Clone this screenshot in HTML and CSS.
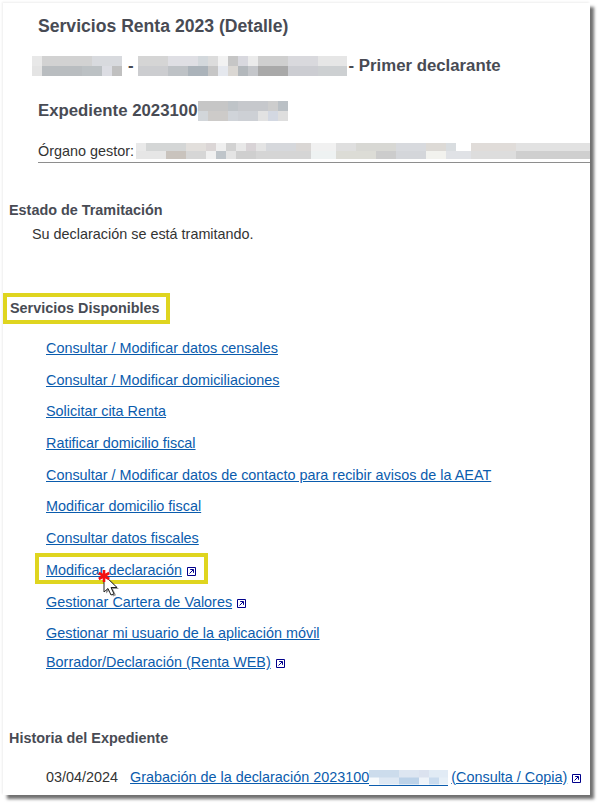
FILE: index.html
```html
<!DOCTYPE html>
<html lang="es">
<head>
<meta charset="utf-8">
<title>Servicios Renta 2023</title>
<link rel="stylesheet" href="styles.css">
</head>
<body>
<main class="card">
  <header class="head">
    <h1 class="title main-title">Servicios Renta 2023 (Detalle)</h1>
    <p class="title person"><span class="mosaic m-name"></span><span class="dash">-</span><span class="mosaic m-surname"></span><span>- Primer declarante</span></p>
    <p class="title file"><span>Expediente 2023100</span><span class="mosaic m-file"></span></p>
    <p class="organ"><span>Órgano gestor:</span><span class="mosaic m-organ"></span></p>
  </header>

  <section class="status">
    <h2 class="section-title">Estado de Tramitación</h2>
    <p class="status-text">Su declaración se está tramitando.</p>
  </section>

  <section class="services">
    <h2 class="section-title boxed">Servicios Disponibles</h2>
    <ul class="links">
      <li><a href="#">Consultar / Modificar datos censales</a></li>
      <li><a href="#">Consultar / Modificar domiciliaciones</a></li>
      <li><a href="#">Solicitar cita Renta</a></li>
      <li><a href="#">Ratificar domicilio fiscal</a></li>
      <li><a href="#">Consultar / Modificar datos de contacto para recibir avisos de la AEAT</a></li>
      <li><a href="#">Modificar domicilio fiscal</a></li>
      <li><a href="#">Consultar datos fiscales</a></li>
      <li class="highlight"><a href="#">Modificar declaración</a>
        <svg class="ext" viewBox="0 0 9 9"><path d="M.5.5h8v8h-8z" fill="#fff" stroke="#00008b"/><path d="M3.200 2.500h3.300v3.300M6.200 2.800 2.500 6.500" fill="none" stroke="#00008b"/></svg>
        <svg class="pointer" viewBox="0 0 24 32">
          <path d="M7 5v17l4-3.500 3 6.500 3-1.200-3-6.300h6z" fill="#333" opacity=".5" transform="translate(2 1.500)"/>
          <path d="M7 5v17l4-3.500 3 6.500 3-1.200-3-6.300h6z" fill="#fff" stroke="#222" stroke-linejoin="round"/>
          <path d="M7 0v12M1.800 3l10.400 6M12.200 3 1.800 9" stroke="#f40f0f" stroke-width="2.600" fill="none"/>
        </svg>
      </li>
      <li><a href="#">Gestionar Cartera de Valores</a>
        <svg class="ext" viewBox="0 0 9 9"><path d="M.5.5h8v8h-8z" fill="#fff" stroke="#00008b"/><path d="M3.200 2.500h3.300v3.300M6.200 2.800 2.500 6.500" fill="none" stroke="#00008b"/></svg>
      </li>
      <li class="tight"><a href="#">Gestionar mi usuario de la aplicación móvil</a></li>
      <li><a href="#">Borrador/Declaración (Renta WEB)</a>
        <svg class="ext" viewBox="0 0 9 9"><path d="M.5.5h8v8h-8z" fill="#fff" stroke="#00008b"/><path d="M3.200 2.500h3.300v3.300M6.200 2.800 2.500 6.500" fill="none" stroke="#00008b"/></svg>
      </li>
    </ul>
  </section>

  <section class="history">
    <h2 class="section-title">Historia del Expediente</h2>
    <p class="entry"><span class="date">03/04/2024</span><a href="#">Grabación de la declaración 2023100<span class="mosaic m-entry"></span></a> <a href="#">(Consulta / Copia)</a>
      <svg class="ext" viewBox="0 0 9 9"><path d="M.5.5h8v8h-8z" fill="#fff" stroke="#00008b"/><path d="M3.200 2.500h3.300v3.300M6.200 2.800 2.500 6.500" fill="none" stroke="#00008b"/></svg>
    </p>
  </section>
</main>
</body>
</html>
```
FILE: styles.css
```css
*, *::before { box-sizing: border-box; }

html, body {
  margin: 0;
  height: 100%;
  background: #fff;
}

body {
  font-family: "Liberation Sans", Arial, sans-serif;
  font-size: 14.4px;
  color: #333;
  overflow: hidden;
  padding: 3px 0 0 3px;
}

.card {
  width: 587px;
  height: 792px;
  background: #fff;
  box-shadow: 4px 4px 3px #707070, -1px -1px 2px #eee;
  overflow: hidden;
  padding-top: 13px;
}

.head {
  padding-left: 35px;
}

.title {
  margin: 0;
  font-size: 16.8px;
  font-weight: 700;
  line-height: 20px;
  color: #484b54;
}

.main-title { font-size: 17.6px; }

.person {
  display: flex;
  align-items: center;
  margin: 20px 0 0 -6px;
  height: 20px;
  white-space: nowrap;
}

.dash { margin: 0 4px 0 6px; }

.file {
  display: flex;
  align-items: center;
  margin-top: 25px;
  height: 20px;
}

.organ {
  display: flex;
  align-items: center;
  height: 20px;
  margin: 20px 0 0;
  border-bottom: 1px solid #8e8e8e;
  box-sizing: content-box;
  padding-bottom: 1px;
  color: #333;
  line-height: 16px;
  white-space: nowrap;
}

.mosaic {
  display: inline-block;
  flex: none;
  background-repeat: no-repeat;
  background-size: 100% 50%;
  background-position: top, bottom;
}

.m-name {
  width: 90px;
  height: 20px;
  background-image:
    linear-gradient(90deg, #e8e8e8 0 10px, #d2d2d2 10px 60px, #d8dade 60px 90px),
    linear-gradient(90deg, #e4e4e4 0 10px, #b9bdc0 10px 50px, #bcc1c4 50px 70px, #dcdde3 70px 80px, #c0c0c0 80px 90px);
}

.m-surname {
  width: 209px;
  height: 20px;
  margin-right: 2px;
  background-image:
    linear-gradient(90deg, #d5d5d5 0 30px, #dfdfe4 30px 60px, #d3d8dc 60px 70px, #dcdcdc 70px 80px, #f2f2f2 80px 90px, #c6c6c6 90px 100px, #d8d8de 100px 110px, #ebebeb 110px 120px, #cfcfcf 120px 150px, #d9d9dd 150px 180px, #e6e6e6 180px 209px),
    linear-gradient(90deg, #cccdd0 0 30px, #bec2c6 30px 50px, #abb3ba 50px 70px, #c6c6c6 70px 80px, #e5e8ee 80px 90px, #dad7d3 90px 100px, #b3b8bc 100px 110px, #c4c6ca 110px 120px, #a9a9a9 120px 150px, #cccdd2 150px 180px, #cdd0d2 180px 209px);
}

.m-file {
  width: 90px;
  height: 20px;
  background-image:
    linear-gradient(90deg, #c6c6c6 0 30px, #bfc4c8 30px 40px, #c6c8cc 40px 70px, #cdcdcd 70px 80px, #bac0c5 80px 90px),
    linear-gradient(90deg, #d2d6da 0 10px, #cdcbc9 10px 30px, #d0d4d9 30px 40px, #cdd0d5 40px 60px, #e2e2e2 60px 70px, #d3d8e2 70px 80px, #dedede 80px 90px);
}

.m-organ {
  width: 456px;
  height: 16px;
  margin-left: 2px;
  background-image:
    linear-gradient(90deg, #e9e9e9 0 10px, #d4d6d6 10px 50px, #e2dfdc 50px 70px, #dbd6d6 70px 80px, #efefef 80px 90px, #d2d2d2 90px 100px, #e8e8e8 100px 110px, #d8d3d6 110px 120px, #e4e4e4 120px 130px, #d6d8dc 130px 160px, #dad7d5 160px 175px, #f1f1f1 175px 200px, #dfdfdf 200px 220px, #d8d8d4 220px 260px, #d8dade 260px 290px, #dddad6 290px 310px, #d9dde0 310px 320px, #fff 320px 335px, #e0dcd9 335px 380px, #e2e2e2 380px 456px),
    linear-gradient(90deg, #e6e6e6 0 30px, #c9c3bd 30px 50px, #d6d6d6 50px 70px, #f0f0f0 70px 80px, #bfc5ca 80px 90px, #e4e4e4 90px 100px, #cfcfcf 100px 120px, #d5d5d5 120px 175px, #eef2f2 175px 200px, #dcdcd6 200px 240px, #cccccc 240px 260px, #d4d6da 260px 290px, #f2f2ee 290px 310px, #e0e2e6 310px 335px, #dddddd 335px 380px, #cfcfcf 380px 456px);
}

.m-entry {
  width: 79px;
  height: 16px;
  margin-right: -1px;
  vertical-align: -4px;
  border-bottom: 1px solid #0b5cad;
  background-image:
    linear-gradient(90deg, #ccdcec 0 30px, #dde6f1 30px 50px, #dbe2ef 50px 60px, #e1ebf5 60px 80px),
    linear-gradient(90deg, #f7fafc 0 10px, #dee8f3 10px 30px, #bcd2e8 30px 50px, #eef3f9 50px 60px, #c9dbee 60px 70px, #e6eff7 70px 80px);
}

.section-title {
  margin: 0;
  font-size: 14.4px;
  font-weight: 700;
  line-height: 18px;
  color: #484b54;
}

.status {
  padding: 38px 0 0 6px;
}

.status-text {
  margin: 6px 0 0 23px;
  line-height: 18px;
}

.services {
  margin-top: 50px;
}

.boxed {
  display: inline-block;
  border: 4px solid #dfd51f;
  padding: 4px 8px 4px 3px;
  line-height: 15px;
  width: 167px;
  white-space: nowrap;
}

.links {
  list-style: none;
  margin: 15px 0 0;
  padding: 0 0 0 43px;
}

.links li {
  height: 31.700px;
  line-height: 18px;
  white-space: nowrap;
}

.links li.tight { height: 29px; }

.links a, .entry a {
  color: #0b5cad;
  text-decoration: underline;
}

.ext {
  display: inline-block;
  width: 9px;
  height: 9px;
  margin-left: 1px;
  vertical-align: -1px;
}

.highlight { position: relative; }

.highlight::before {
  content: "";
  position: absolute;
  left: -11px;
  top: -8px;
  width: 173px;
  height: 31px;
  border: 4px solid #dfd51f;
  pointer-events: none;
}

.highlight a, .highlight .ext { position: relative; }

.pointer {
  position: absolute;
  left: 51px;
  top: 9px;
  width: 24px;
  height: 32px;
}

.history {
  margin-top: 44px;
  padding-left: 6px;
}

.entry {
  margin: 21px 0 0 37px;
  line-height: 18px;
  white-space: nowrap;
}

.date { margin-right: 12px; color: #333; }
```
